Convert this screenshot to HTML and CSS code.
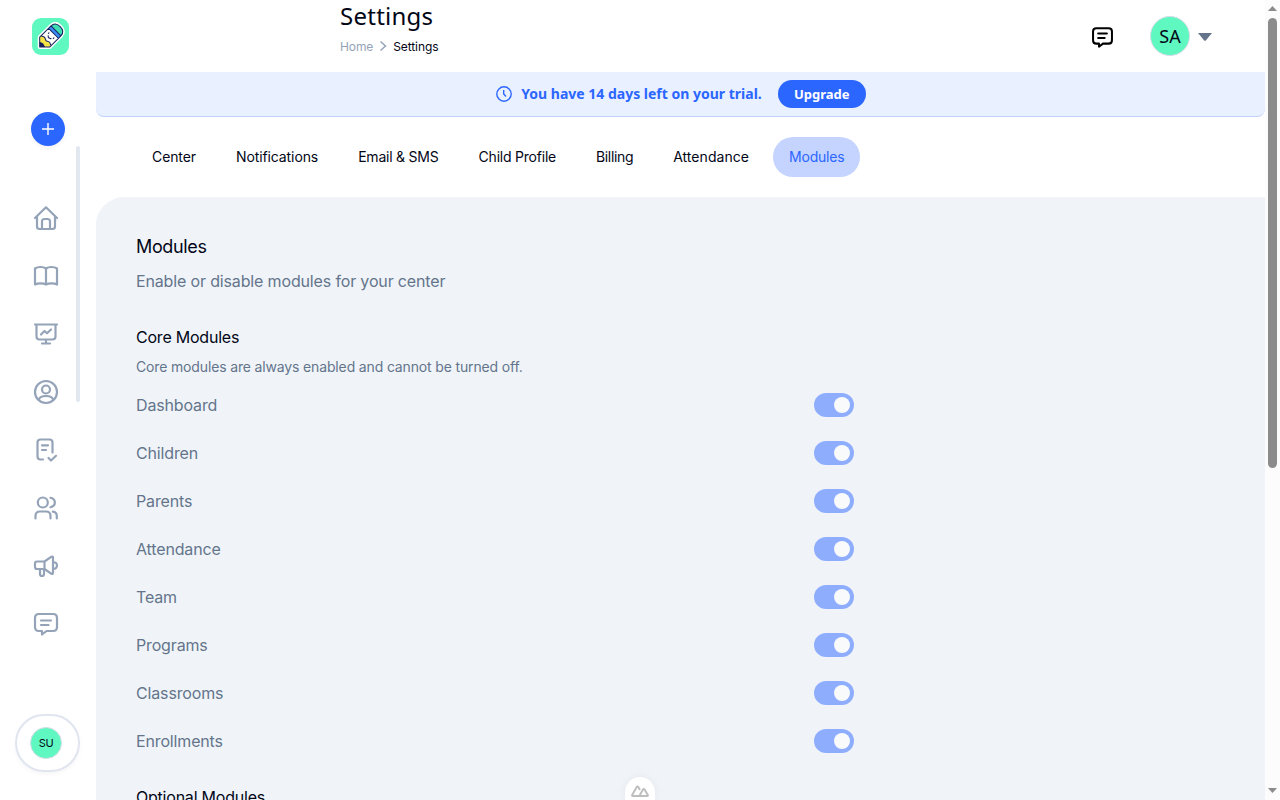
FILE: index.html
```html
<!DOCTYPE html>
<html lang="en">
    <head>
        <meta charset="UTF-8">
        <meta name="viewport" content="width=device-width, initial-scale=1.0">
        <title>Settings</title>
        <link rel="stylesheet" href="styles.css">
    </head>
    <body>

        <!-- sidebar -->
        <aside class="sidebar">
            <svg class="logo" viewBox="0 0 37 37">
                <rect width="37" height="37" rx="9" fill="#5ff8c0"/>
                <g transform="translate(18.3 18.5) rotate(45)">
                    <path d="M-7-8Q-7-14 0-14T7-8V8L0 15L-7 8Z" fill="#fff" stroke="#fff" stroke-width="4" stroke-linejoin="round"/>
                    <path d="M-7-8Q-7-14 0-14T7-8Z" fill="#3fdcb4"/>
                    <path d="M-7-8H7V-4.500H-7Z" fill="#3b8df5"/>
                    <path d="M-7 6L-3.500 4.500L0 6L3.500 4.500L7 6V8L0 15L-7 8Z" fill="#f4e545"/>
                    <path d="M-3.800 11.200L0 10L3.800 11.200L0 15Z" fill="#16205c"/>
                    <path d="M-7-8Q-7-14 0-14T7-8V8L0 15L-7 8ZM-7-8H7M-7-4.500H7M-7 6L-3.500 4.500L0 6L3.500 4.500L7 6" fill="none" stroke="#16205c" stroke-width="1" stroke-linejoin="round"/>
                    <path d="M-3.500-1.600v.8M3.500-1.600v.8M-2 1Q0 3.200 2 1" fill="none" stroke="#16205c" stroke-width="1.100" stroke-linecap="round"/>
                </g>
            </svg>
            <button type="button" class="btn-add">
                <svg viewBox="0 0 14 14"><path d="M7 1v12M1 7h12"/></svg>
            </button>
            <div class="nav-wrap">
                <nav class="side-nav">
                    <svg viewBox="0 0 24 24"><path d="M1 12L12 1.300L23 12M3 10.500V20.500Q3 23 5.500 23H18.500Q21 23 21 20.500V10.500M8 23V15.500Q8 13 10.500 13H13.500Q16 13 16 15.500V23"/></svg>
                    <svg viewBox="0 0 24 24"><path d="M12 4.500Q10 3 6.500 3T1 4.500V20.500Q3 19.300 6.500 19.300T12 20.500Q14 19.300 17.500 19.300T23 20.500V4.500Q21 3 17.500 3T12 4.500V20.500"/></svg>
                    <svg viewBox="0 0 24 24"><path d="M1 2.500H23M2.500 2.500V14.500Q2.500 17.500 5.500 17.500H18.500Q21.500 17.500 21.500 14.500V2.500M12 17.500V21.500M8 21.500H16M7 12.500L10.500 9L13 11.300L17 7.500"/></svg>
                    <svg viewBox="0 0 24 24"><circle cx="12" cy="12" r="11"/><circle cx="12" cy="9.500" r="4"/><path d="M4.800 20Q5.500 16 12 16T19.200 20"/></svg>
                    <svg viewBox="0 0 24 24"><path d="M9 21.500H6.500Q3.500 21.500 3.500 18.500V4.500Q3.500 1.500 6.500 1.500H15.500Q18.500 1.500 18.500 4.500V14.500M8 7.300H14M8 12H12M14.500 20L17 22.500L22 17.800"/></svg>
                    <svg viewBox="0 0 24 24"><circle cx="8.800" cy="6.500" r="5"/><path d="M1.500 22.500V20Q1.500 15.500 6 15.500H12Q16.500 15.500 16.500 20V22.500M16.500 1.800C22.300 3.300 22.300 9.700 16.500 11.200M18.800 15.700Q22.800 16.300 22.800 20V22.500"/></svg>
                    <svg viewBox="0 0 24 24"><path d="M10.500 7.500H3Q1 7.500 1 9.500V13Q1 15 3 15H10.500ZM10.500 7.500L17.500 2.700Q19 2 19 4V18.500Q19 20.500 17.500 19.800L10.500 15M6 15V20Q6 22 8 22T10 20V15M19 8Q23 8.300 23 11.500T19 15"/></svg>
                    <svg viewBox="0 0 24 24"><path d="M8 19H5Q1 19 1 15V6Q1 2 5 2H19Q23 2 23 6V15Q23 19 19 19H12.500L8 22.500ZM7 8.500H17M7 13H14.500"/></svg>
                </nav>
                <span class="side-scroll"></span>
            </div>
            <div class="user-pill"><span class="avatar avatar-sm">SU</span></div>
        </aside>

        <main class="main">
            <header class="header">
                <div class="title">
                    <h1>Settings</h1>
                    <div class="breadcrumb">
                        <span class="crumb-home">Home</span>
                        <svg viewBox="0 0 8 12"><path d="M1.500 1.500L6.500 6L1.500 10.500"/></svg>
                        <span>Settings</span>
                    </div>
                </div>
                <div class="header-right">
                    <svg class="chat" viewBox="0 0 24 24"><path d="M8 19H5Q1.200 19 1.200 15V5Q1.200 1.500 5 1.500H19Q22.800 1.500 22.800 5V15Q22.800 19 19 19H12.500L8 22.500ZM7 7.500H17M7 12.500H14.500"/></svg>
                    <span class="avatar">SA</span>
                    <svg class="caret" viewBox="0 0 14 8"><path d="M0 0H14L7.800 7.400Q7 8.200 6.200 7.400Z"/></svg>
                </div>
            </header>

            <div class="trial">
                <svg viewBox="0 0 16 16"><circle cx="8" cy="8" r="7.200"/><path d="M7.700 4V8L10 10.500"/></svg>
                <span>You have 14 days left on your trial.</span>
                <button type="button">Upgrade</button>
            </div>

            <nav class="tabs">
                <a>Center</a>
                <a>Notifications</a>
                <a>Email &amp; SMS</a>
                <a>Child Profile</a>
                <a>Billing</a>
                <a>Attendance</a>
                <a class="active">Modules</a>
            </nav>

            <section class="panel">
                <h2>Modules</h2>
                <p class="lead">Enable or disable modules for your center</p>
                <h3>Core Modules</h3>
                <p class="note">Core modules are always enabled and cannot be turned off.</p>
                <ul class="modules">
                    <li><span>Dashboard</span><i class="toggle"></i></li>
                    <li><span>Children</span><i class="toggle"></i></li>
                    <li><span>Parents</span><i class="toggle"></i></li>
                    <li><span>Attendance</span><i class="toggle"></i></li>
                    <li><span>Team</span><i class="toggle"></i></li>
                    <li><span>Programs</span><i class="toggle"></i></li>
                    <li><span>Classrooms</span><i class="toggle"></i></li>
                    <li><span>Enrollments</span><i class="toggle"></i></li>
                </ul>
                <h3>Optional Modules</h3>
            </section>
        </main>

        <!-- page scrollbar -->
        <div class="scrollbar">
            <svg viewBox="0 0 9 5"><path d="M0 5L4.500 0L9 5Z"/></svg>
            <span class="thumb"></span>
            <svg viewBox="0 0 9 5"><path d="M0 0H9L4.500 5Z"/></svg>
        </div>

        <div class="devtools">
            <svg viewBox="0 0 18 12"><path d="M8 11H2Q.600 11 1.300 9.700L5.700 2Q6.500.800 7.300 2L9 5M8 11H16Q17.400 11 16.700 9.700L13.500 4.500Q12.800 3.500 12 4.500L8.300 11"/></svg>
        </div>
    </body>
</html>
```
FILE: styles.css
```css
*{
    margin: 0;
    padding: 0;
    box-sizing: border-box;
}
body{
    display: flex;
    height: 800px;
    overflow: hidden;
    background-color: #ffffff;
    color: #020617;
    font-family: Inter, "Liberation Sans", sans-serif;
    font-size: 16px;
}
svg{
    display: block;
    flex-shrink: 0;
}
button{
    border: none;
    color: #ffffff;
}

/* sidebar */
.sidebar{
    display: flex;
    flex-direction: column;
    width: 96px;
    padding-top: 18px;
}
.logo{
    width: 37px;
    height: 37px;
    margin-left: 32px;
}
.btn-add{
    display: flex;
    align-items: center;
    justify-content: center;
    width: 34px;
    height: 34px;
    margin: 57px 0 0 31px;
    border-radius: 50%;
    background-color: #2b66ff;
    box-shadow: 0 2px 4px #0000000d;
}
.btn-add svg{
    width: 14px;
    height: 14px;
    stroke: #ffffff;
    stroke-width: 1.4;
}
.nav-wrap{
    display: flex;
    width: 80px;
    justify-content: space-between;
}
.side-nav{
    display: flex;
    flex-direction: column;
    gap: 34px;
    padding: 60px 0 0 34px;
}
.side-nav svg{
    width: 24px;
    height: 24px;
    fill: none;
    stroke: #94a3b8;
    stroke-width: 2.2;
    stroke-linecap: round;
    stroke-linejoin: round;
    overflow: visible;
}
.side-scroll{
    width: 4px;
    height: 256px;
    border-radius: 2px;
    background-color: #e2e8f0;
}
.user-pill{
    display: flex;
    align-items: center;
    width: 65px;
    height: 58px;
    margin: 78px 0 0 15px;
    padding-left: 13px;
    border: 2px solid #e0e5f0;
    border-radius: 32px;
    box-shadow: 0 2px 4px #0000000a;
}
.avatar{
    display: flex;
    align-items: center;
    justify-content: center;
    width: 40px;
    height: 40px;
    border: 1px solid #d5dce8;
    border-radius: 50%;
    background-color: #5ff8c0;
    font-family: "Noto Sans", sans-serif;
    font-size: 18px;
}
.avatar-sm{
    width: 32px;
    height: 32px;
    font-family: Inter, sans-serif;
    font-size: 11px;
    letter-spacing: -0.3px;
}

/* header */
.main{
    display: flex;
    flex-direction: column;
    width: 1169px;
}
.header{
    display: flex;
    flex-shrink: 0;
    justify-content: space-between;
    height: 72px;
    padding: 0 53px 0 244px;
}
h1{
    font-family: "Noto Sans", sans-serif;
    font-size: 24px;
    font-weight: 400;
    line-height: 32px;
    letter-spacing: 0.25px;
}
.breadcrumb{
    display: flex;
    align-items: center;
    height: 16px;
    margin-top: 6px;
    font-size: 12px;
    letter-spacing: -0.1px;
}
.breadcrumb svg{
    width: 8px;
    height: 12px;
    margin: 0 6px;
    fill: none;
    stroke: #94a3b8;
    stroke-width: 1.5;
}
.crumb-home{
    color: #94a3b8;
}
.header-right{
    display: flex;
    align-items: center;
}
.chat{
    width: 21px;
    height: 21px;
    margin: 2px 37.5px 0 0;
    fill: none;
    stroke: #000000;
    stroke-width: 2.3;
    stroke-linejoin: round;
    stroke-linecap: round;
}
.caret{
    width: 14px;
    height: 8px;
    margin: 2px 0 0 8px;
    fill: #64748b;
}

/* trial banner */
.trial{
    display: flex;
    flex-shrink: 0;
    align-items: center;
    justify-content: center;
    height: 45px;
    border-bottom: 1px solid #bfd1ff;
    border-radius: 0 0 8px 8px;
    background-color: #e9f0ff;
    color: #2b66ff;
    font-family: "Noto Sans", sans-serif;
    font-size: 14px;
    font-weight: 700;
}
.trial span{
    padding-bottom: 2px;
}
.trial svg{
    width: 16px;
    height: 16px;
    margin: 0 9px 0 1px;
    fill: none;
    stroke: #2b66ff;
    stroke-width: 1.4;
}
.trial button{
    width: 88px;
    height: 28px;
    padding-bottom: 1px;
    margin-left: 16px;
    border-radius: 14px;
    background-color: #2b66ff;
    font-family: "Noto Sans", sans-serif;
    font-size: 13px;
    font-weight: 700;
}

/* tabs */
.tabs{
    display: flex;
    flex-shrink: 0;
    gap: 8px;
    padding: 20px 40px;
}
.tabs a{
    padding: 0 16px;
    border-radius: 20px;
    font-size: 14px;
    line-height: 40px;
    letter-spacing: -0.1px;
}
.tabs a:nth-child(3){
    letter-spacing: -0.22px;
}
.tabs a:nth-child(4){
    letter-spacing: -0.22px;
}
.tabs a:nth-child(5){
    letter-spacing: -0.35px;
}
.tabs a:nth-child(6){
    letter-spacing: 0.05px;
}
.tabs .active{
    background-color: #c4d4ff;
    color: #2b66ff;
    letter-spacing: -0.2px;
}

/* modules */
.panel{
    flex: 1;
    padding: 36px 40px 0;
    border-top-left-radius: 28px;
    background-color: #f0f4f9;
    color: #64748b;
}
h2, h3{
    color: #020617;
    font-weight: 400;
}
h2{
    font-size: 18px;
    line-height: 28px;
    letter-spacing: -0.35px;
}
h3{
    font-size: 16px;
    line-height: 24px;
    letter-spacing: -0.22px;
}
.lead{
    margin: 8px 0 32px;
    line-height: 24px;
    letter-spacing: -0.15px;
}
.note{
    margin: 8px 0 16px;
    font-size: 14px;
    line-height: 20px;
    letter-spacing: -0.15px;
}
.modules{
    display: flex;
    flex-direction: column;
    gap: 24px;
    width: 718px;
    margin-bottom: 32px;
    list-style: none;
}
.modules li{
    display: flex;
    justify-content: space-between;
    line-height: 24px;
    letter-spacing: -0.15px;
}
.toggle{
    display: flex;
    justify-content: flex-end;
    width: 40px;
    height: 24px;
    padding: 4px;
    border-radius: 12px;
    background-color: #8fadfd;
}
.toggle::after{
    content: "";
    width: 16px;
    height: 16px;
    border-radius: 50%;
    background-color: #f8fafc;
}

.scrollbar{
    display: flex;
    flex-direction: column;
    align-items: center;
    width: 15px;
    padding: 6px 0 7px;
    background-color: #fcfcfc;
}
.scrollbar svg{
    width: 9px;
    height: 5px;
    fill: #8b8b8b;
}
.thumb{
    width: 9px;
    height: 450px;
    margin: 7px 0 auto;
    border-radius: 5px;
    background-color: #8b8b8b;
}

/* floating button at the bottom of the window */
.devtools{
    position: absolute;
    left: 625px;
    top: 777px;
    display: flex;
    justify-content: center;
    width: 30px;
    height: 23px;
    padding-top: 8px;
    border-radius: 15px 15px 0 0;
    background-color: #ffffff;
    box-shadow: 0 0 8px #0000000f;
}
.devtools svg{
    width: 18px;
    height: 12px;
    fill: none;
    stroke: #bdbdbd;
    stroke-width: 1.9;
}
```
